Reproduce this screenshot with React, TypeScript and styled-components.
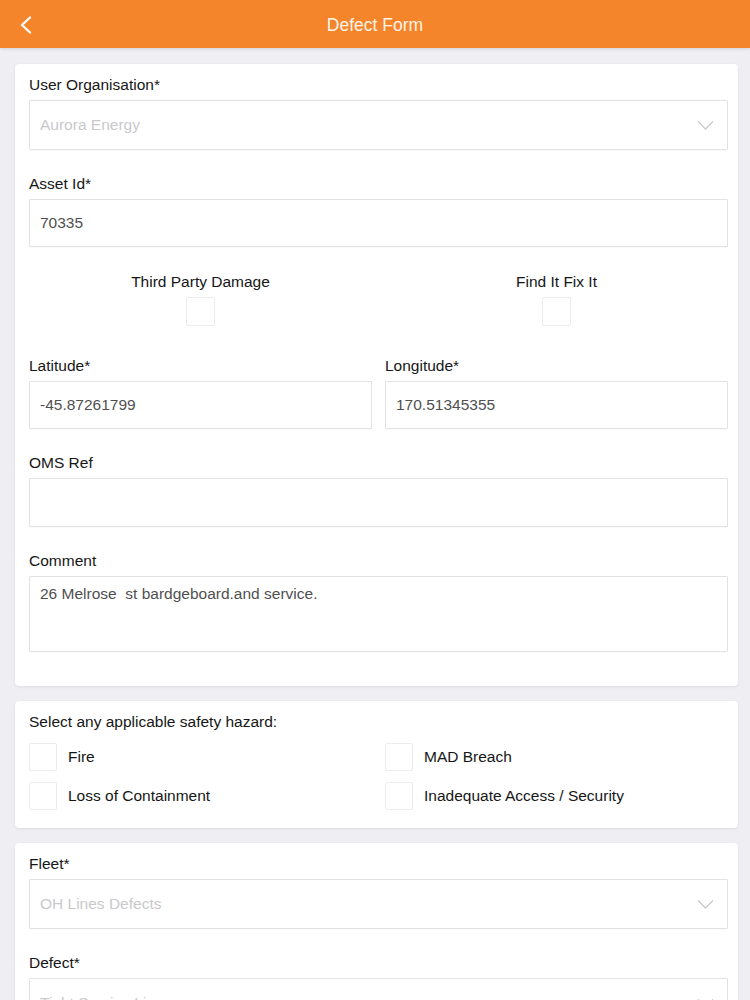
import React from "react";
import styled, { createGlobalStyle } from "styled-components";

const Global = createGlobalStyle`
  html, body {
    margin: 0;
    padding: 0;
    overflow: hidden;
    background: #efeff3;
  }
  body {
    font-family: "Liberation Sans", Arial, Helvetica, sans-serif;
    -webkit-font-smoothing: antialiased;
  }
  * { box-sizing: border-box; }
`;

const Page = styled.div`
  width: 750px;
  min-height: 1000px;
  background: #efeff3;
  display: flex;
  flex-direction: column;
`;

const Header = styled.header`
  height: 48px;
  background: #f5852a;
  display: flex;
  align-items: center;
  justify-content: center;
  position: relative;
  box-shadow: 0 1px 3px rgba(0, 0, 0, 0.12);
  flex-shrink: 0;
`;

const BackButton = styled.button`
  position: absolute;
  left: 14px;
  top: 13px;
  width: 24px;
  height: 24px;
  padding: 0;
  border: 0;
  background: transparent;
  display: flex;
  align-items: center;
  justify-content: center;
`;

const Title = styled.h1`
  margin: 2px 0 0;
  font-size: 17.5px;
  font-weight: 400;
  color: #fff4e8;
  letter-spacing: 0;
`;

const Content = styled.main`
  display: flex;
  flex-direction: column;
  gap: 15px;
  padding: 16px 12px 0 15px;
`;

const Card = styled.section<{ $pb?: number }>`
  background: #fff;
  border-radius: 4px;
  box-shadow: 0 1px 3px rgba(0, 0, 0, 0.07), 0 0 1px rgba(0, 0, 0, 0.04);
  padding: 11px 10px ${(p) => p.$pb ?? 34}px 14px;
  display: flex;
  flex-direction: column;
  gap: 24px;
`;

const Field = styled.div`
  display: flex;
  flex-direction: column;
`;

const Label = styled.label`
  font-size: 15.5px;
  line-height: 20px;
  color: #161616;
  margin-bottom: 5px;
`;

const Control = styled.div<{ $h: number }>`
  height: ${(p) => p.$h}px;
  border: 1px solid #e2e2e4;
  border-radius: 1px;
  background: #fff;
  display: flex;
  align-items: center;
  padding: 0 13px 0 10px;
  font-size: 15.5px;
  color: #4d4d4d;
  box-shadow: 0 1px 1px rgba(0, 0, 0, 0.025);
`;

const Placeholder = styled.span`
  flex: 1;
  color: #c9c9cc;
`;

const Value = styled.span`
  flex: 1;
  color: #505050;
`;

const TextArea = styled.div`
  height: 76px;
  border: 1px solid #e2e2e4;
  border-radius: 1px;
  padding: 7px 10px;
  font-size: 15.5px;
  line-height: 20px;
  color: #505050;
  white-space: pre;
`;

const TwoCol = styled.div<{ $gap?: number }>`
  display: grid;
  grid-template-columns: 1fr 1fr;
  column-gap: 13px;
  row-gap: ${(p) => p.$gap ?? 0}px;
`;

const ToggleCol = styled.div`
  display: flex;
  flex-direction: column;
  align-items: center;
`;

const ToggleLabel = styled.span`
  font-size: 15.5px;
  line-height: 20px;
  color: #161616;
  margin-bottom: 5px;
`;

const Box = styled.span<{ $size: number }>`
  display: inline-block;
  width: ${(p) => p.$size}px;
  height: ${(p) => p.$size}px;
  border: 1px solid #ececee;
  border-radius: 2px;
  background: #fff;
  flex-shrink: 0;
`;

const ToggleRow = styled.div`
  margin: 1px 0 6px;
`;

const HazardTitle = styled.div`
  font-size: 15.5px;
  line-height: 20px;
  color: #161616;
  margin-bottom: 11px;
`;

const HazardItem = styled.label`
  display: flex;
  align-items: center;
  gap: 11px;
  height: 28px;
  font-size: 15.5px;
  color: #161616;
`;

const HazardGroup = styled.div`
  display: flex;
  flex-direction: column;
`;

const Chevron = () => (
  <svg width="17" height="10" viewBox="0 0 17 10" fill="none">
    <polyline points="1,1.5 8.5,9 16,1.5" stroke="#cacacd" strokeWidth="1.3" />
  </svg>
);

const Select = ({ text, h }: { text: string; h: number }) => (
  <Control $h={h}>
    <Placeholder>{text}</Placeholder>
    <Chevron />
  </Control>
);

const Input = ({ text, h = 48 }: { text: string; h?: number }) => (
  <Control $h={h}>
    <Value>{text}</Value>
  </Control>
);

export default function App() {
  return (
    <Page>
      <Global />
      <Header>
        <BackButton aria-label="Back">
          <svg width="14" height="18" viewBox="0 0 14 18" fill="none">
            <polyline
              points="11,1.5 3,9 11,16.5"
              stroke="#ffffff"
              strokeWidth="2.3"
              strokeLinecap="round"
              strokeLinejoin="round"
            />
          </svg>
        </BackButton>
        <Title>Defect Form</Title>
      </Header>
      <Content>
        <Card>
          <Field>
            <Label>User Organisation*</Label>
            <Select text="Aurora Energy" h={50} />
          </Field>
          <Field>
            <Label>Asset Id*</Label>
            <Input text="70335" />
          </Field>
          <ToggleRow>
            <TwoCol>
              <ToggleCol>
                <ToggleLabel>Third Party Damage</ToggleLabel>
                <Box $size={29} />
              </ToggleCol>
              <ToggleCol>
                <ToggleLabel>Find It Fix It</ToggleLabel>
                <Box $size={29} />
              </ToggleCol>
            </TwoCol>
          </ToggleRow>
          <TwoCol>
            <Field>
              <Label>Latitude*</Label>
              <Input text="-45.87261799" />
            </Field>
            <Field>
              <Label>Longitude*</Label>
              <Input text="170.51345355" />
            </Field>
          </TwoCol>
          <Field>
            <Label>OMS Ref</Label>
            <Input text="" h={49} />
          </Field>
          <Field>
            <Label>Comment</Label>
            <TextArea>26 Melrose  st bardgeboard.and service.</TextArea>
          </Field>
        </Card>

        <Card $pb={18}>
          <HazardGroup>
            <HazardTitle>Select any applicable safety hazard:</HazardTitle>
            <TwoCol $gap={11}>
              <HazardItem>
                <Box $size={28} />
                Fire
              </HazardItem>
              <HazardItem>
                <Box $size={28} />
                MAD Breach
              </HazardItem>
              <HazardItem>
                <Box $size={28} />
                Loss of Containment
              </HazardItem>
              <HazardItem>
                <Box $size={28} />
                Inadequate Access / Security
              </HazardItem>
            </TwoCol>
          </HazardGroup>
        </Card>

        <Card>
          <Field>
            <Label>Fleet*</Label>
            <Select text="OH Lines Defects" h={50} />
          </Field>
          <Field>
            <Label>Defect*</Label>
            <Select text="Tight Service Lines" h={50} />
          </Field>
          <Field>
            <Label>Priority*</Label>
            <Select text="" h={50} />
          </Field>
        </Card>
      </Content>
    </Page>
  );
}
